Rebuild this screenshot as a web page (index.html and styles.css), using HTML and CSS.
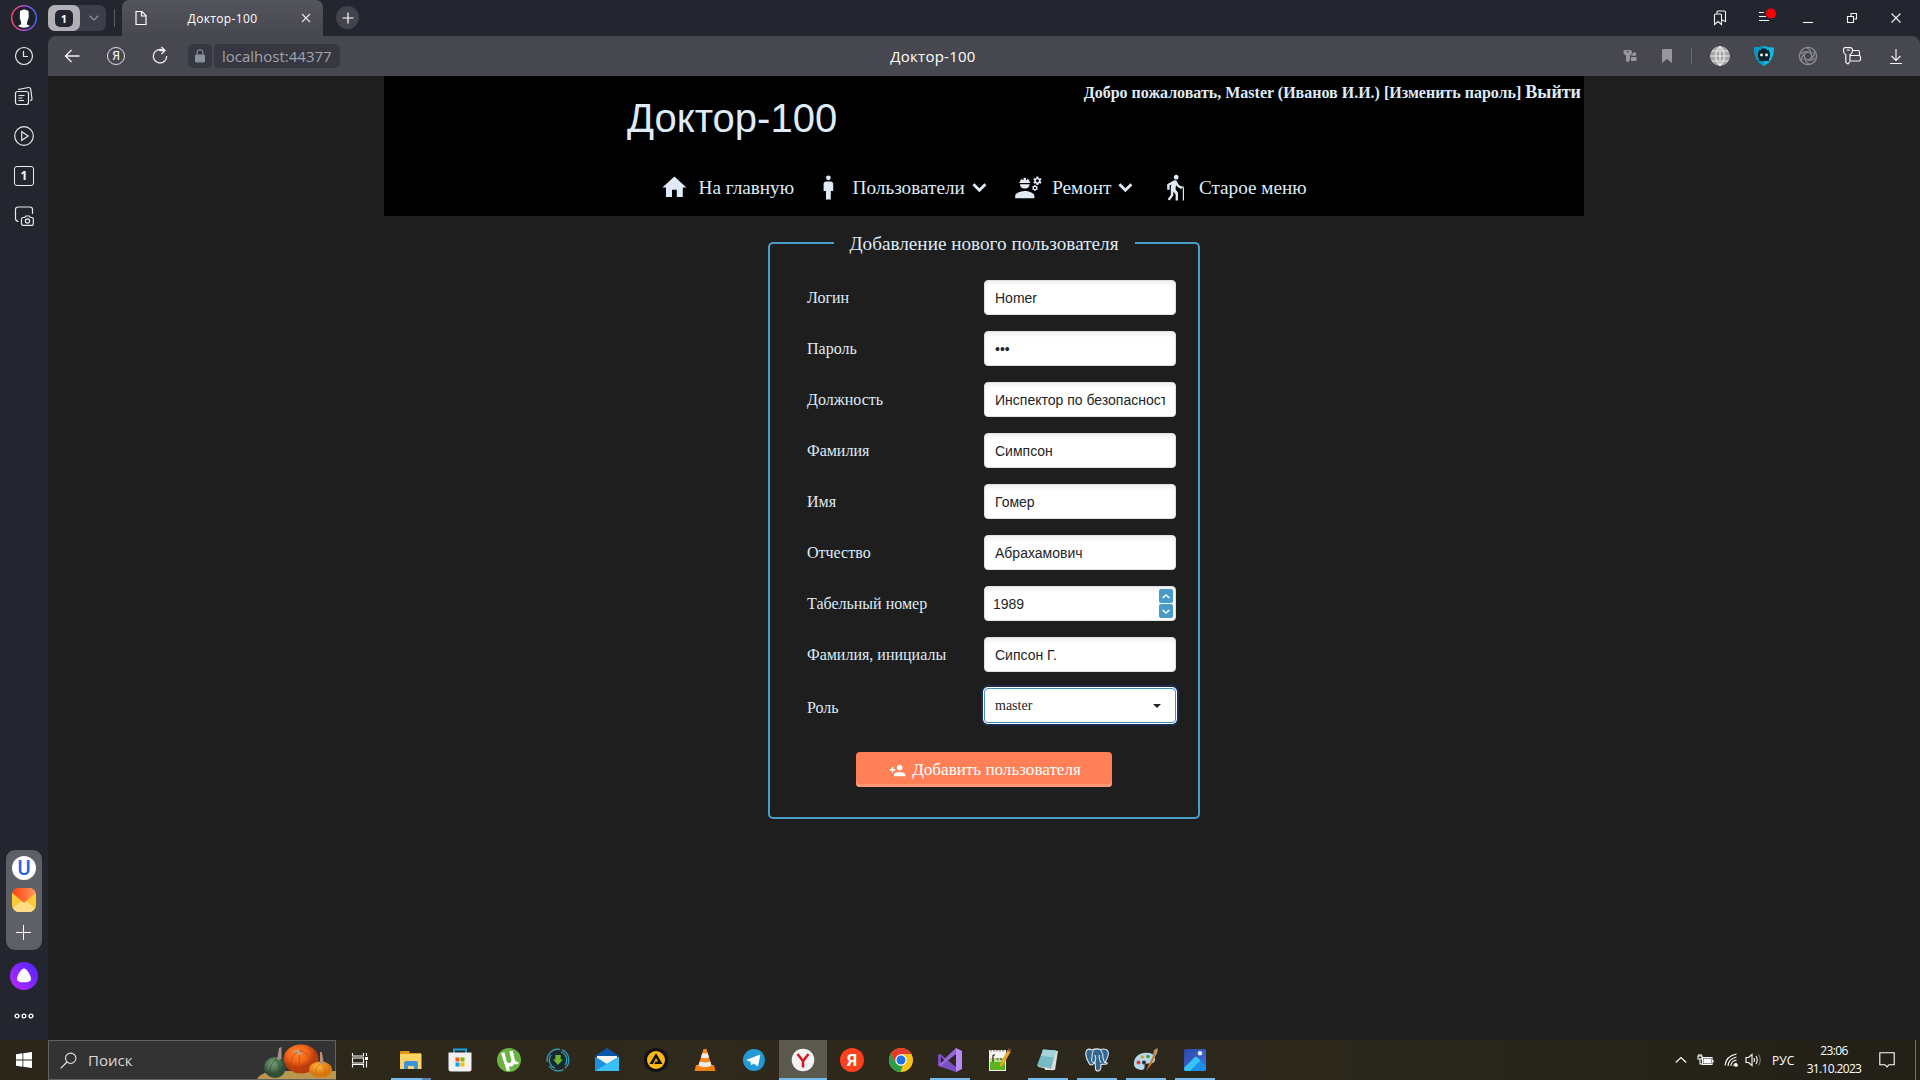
FILE: index.html
```html
<!DOCTYPE html>
<html lang="ru">
<head>
<meta charset="utf-8">
<title>Доктор-100</title>
<link rel="stylesheet" href="styles.css">
</head>
<body>
<div class="desktop">
  <div class="browser">
    <aside class="sidebar">
      <div class="side-top">
        <svg class="avatar" width="26" height="26" viewBox="0 0 26 26"><defs><linearGradient id="ring"><stop offset="0" stop-color="#ff4d5a"/><stop offset=".5" stop-color="#b94be0"/><stop offset="1" stop-color="#3b6bff"/></linearGradient></defs><circle cx="13" cy="13" r="12.3" fill="#20222b" stroke="url(#ring)" stroke-width="1.4"/><path d="M9 6q4-3 8.500 0l.3 6-1.800 5.500 0 2 3 1.500q-6 3.500-12 0l3.200-1.800-.2-2.200-1.200-4z" fill="#fff"/></svg>
        <svg class="side-icon" width="20" height="20" viewBox="0 0 20 20"><circle cx="10" cy="10" r="8.500"/><path d="M9.500 5v5.500H14"/></svg>
        <svg class="side-icon" width="20" height="20" viewBox="0 0 20 20"><rect x="1.500" y="5.500" width="13" height="13" rx="2"/><path d="M4.500 9.500h6M4.500 12h4M4.500 14.500h5.500M4 3.500l10.500-2q1.800-.2 2.200 1.500l1.300 10q0 1.500-1.800 1.700"/></svg>
        <svg class="side-icon" width="20" height="20" viewBox="0 0 20 20"><circle cx="10" cy="10" r="9.300"/><path d="M7.700 5.700v8.600l6.500-4.300z"/></svg>
        <div class="side-count">1</div>
        <svg class="side-icon" width="20" height="20" viewBox="0 0 20 20"><path d="M4.500 15.500q-3-.5-3-3V3.500q0-2.500 2.500-2.500h12q2.500 0 2.500 2.500V8M7.500 13q0-1.500 1.500-1.500h1.800l1-1.500h3.500l1 1.500H18q1.300 0 1.300 1.500v5q0 1.300-1.300 1.300H9q-1.500 0-1.500-1.300z"/><circle cx="13.500" cy="15" r="2.100"/></svg>
      </div>
      <div class="side-bottom">
        <div class="side-apps">
          <div class="app-u">U</div>
          <svg width="24" height="24" viewBox="0 0 24 24"><defs><linearGradient id="flap" x1="0" x2="1"><stop offset="0" stop-color="#ff3d12"/><stop offset="1" stop-color="#ff9a5c"/></linearGradient></defs><rect width="24" height="24" rx="7" fill="#ffc933"/><path d="M1 20 12 11 23 20q-2 4-6 4H7q-4 0-6-4z" fill="#ffdf85"/><path d="M.5 5Q2 0 7 0h10q5 0 6.500 5L12 15z" fill="url(#flap)"/></svg>
          <svg class="side-icon" width="16" height="16" viewBox="0 0 16 16"><path d="M7.500 0v15M0 7.500h15"/></svg>
        </div>
        <svg width="28" height="28" viewBox="0 0 28 28"><defs><linearGradient id="alice" x1="0" y1="1" x2="1" y2="0"><stop offset="0" stop-color="#c026ff"/><stop offset="1" stop-color="#4a26ff"/></linearGradient></defs><circle cx="14" cy="14" r="14" fill="url(#alice)"/><path d="M14 6.500c2.500 0 7 6.500 7 10.500 0 2.500-3 3.300-7 3.300s-7-.8-7-3.300c0-4 4.500-10.500 7-10.500z" fill="#fff"/></svg>
        <svg class="dots" width="20" height="6" viewBox="0 0 20 6"><circle cx="3" cy="3" r="1.900"/><circle cx="10" cy="3" r="1.900"/><circle cx="17" cy="3" r="1.900"/></svg>
      </div>
    </aside>

    <div class="window">
      <div class="tabstrip">
        <div class="tab-group"><span class="group-badge"><span>1</span></span><svg width="10" height="6" viewBox="0 0 10 6"><path d="M.7.700 5 5 9.300.7" fill="none" stroke="#8b8c94" stroke-width="1.300"/></svg></div>
        <div class="strip-sep"></div>
        <div class="tab">
          <svg width="12" height="16" viewBox="0 0 12 16"><path d="M1 1.500h6l4 4v9H1zM6.500 1.500V6H11" fill="none" stroke="#fff" stroke-width="1.200"/></svg>
          <span class="tab-title">Доктор-100</span>
          <svg width="10" height="10" viewBox="0 0 10 10"><path d="m1 1 8 8M9 1 1 9" stroke="#e4e4e8" stroke-width="1.100"/></svg>
        </div>
        <div class="new-tab"><svg width="12" height="12" viewBox="0 0 12 12"><path d="M6 .5v11M.5 6h11" stroke="#fff" stroke-width="1.200"/></svg></div>
        <div class="window-controls">
          <svg width="16" height="16" viewBox="0 0 16 16"><path d="M2.500 5q0-1 1-1h5q1 0 1 1v9.500L6 11.500l-3.500 3zM5 4V2q0-1 1-1h6.500q1 0 1 1v9.500L10 10" /></svg>
          <svg class="menu-icon" width="20" height="16" viewBox="0 0 20 16"><path d="M1 3.500h5M1 7.500h7M1 11.500h10"/><circle cx="13" cy="4.500" r="5" class="alert"/></svg>
          <svg width="12" height="12" viewBox="0 0 12 12"><path d="M1 10.500h10"/></svg>
          <svg width="12" height="12" viewBox="0 0 12 12"><path d="M1.500 4.500h6v6h-6zM5 4.500v-3h5.500V7h-3"/></svg>
          <svg width="12" height="12" viewBox="0 0 12 12"><path d="m1.500 1.500 9 9M10.500 1.500l-9 9"/></svg>
        </div>
      </div>

      <div class="toolbar">
        <div class="nav-buttons">
          <svg width="18" height="18" viewBox="0 0 18 18"><path d="M16.500 9H2.500M8.500 3l-6 6 6 6"/></svg>
          <div class="ya-button">Я</div>
          <svg width="18" height="20" viewBox="0 0 18 20"><path d="M12.500 4.500A6.700 6.700 0 1 0 15.700 10M8.500 4.500h5.500M10.500 1l3.500 3.500-3.500 3.500"/></svg>
        </div>
        <div class="lock"><svg width="10" height="14" viewBox="0 0 10 14"><path d="M2.200 6V3.300q0-2.500 2.800-2.500t2.800 2.500V6" fill="none" stroke="#7f848c" stroke-width="1.300"/><rect y="5.500" width="10" height="8" rx="1.500" fill="#8a929a"/></svg></div>
        <div class="url">localhost:44377</div>
        <div class="page-title">Доктор-100</div>
        <div class="extensions">
          <svg class="grey" width="14" height="14" viewBox="0 0 14 14"><path fill-rule="evenodd" d="M1.500 1h6Q9 1 9 3.500 9 5.500 7 6.500V11l-2.200 2.500L3 12V6.500Q.3 5.500.3 3 .3 1 1.500 1zM3.500 2.300v1h2.500v-1zM10 3.500h3v3.300H8.200V6.500Q9.600 5.500 10 3.500zM8 8h5.500v4H8z"/></svg>
          <svg class="grey" width="10" height="14" viewBox="0 0 10 14"><path d="M0 1q0-1 1-1h8q1 0 1 1v13l-5-4-5 4z"/></svg>
          <div class="bar-sep"></div>
          <svg width="20" height="20" viewBox="0 0 20 20"><circle cx="10" cy="10" r="10" fill="#a6a6a6"/><path d="M0 10h20M2 5h16M2 15h16M10 0v20M10 0Q1 10 10 20M10 0q9 10 0 20" fill="none" stroke="#e6e6e6" stroke-width="1.200"/></svg>
          <svg width="20" height="20" viewBox="0 0 20 20"><path d="M0 1.500Q5 1.500 10 0q5 1.500 10 1.500Q20 16 10 20 0 16 0 1.500z" fill="#10b9e2"/><path d="M0 1.500Q5 1.500 10 0v20Q0 16 0 1.500z" fill="#0896bd"/><path d="M5 4h2l1-1.500h4L13 4h2v2h1v6h-1v3H5v-3H4V6h1z" fill="#10232d"/><circle cx="7.500" cy="9" r="1.400" fill="#fff"/><circle cx="12.500" cy="9" r="1.400" fill="#fff"/></svg>
          <svg class="swirl" width="20" height="20" viewBox="0 0 20 20"><circle cx="10" cy="10" r="8.600"/><circle cx="10" cy="10" r="3.800"/><path d="M10 6.200q-4.500-1-7 2M13.300 8q-.8-4.500-4.500-6M13.600 12q3.500-3 2.400-6.500M10 13.800q4.500 1 7-2M6.700 12q.8 4.500 4.500 6M6.400 8q-3.500 3-2.400 6.500"/></svg>
          <svg class="line" width="20" height="20" viewBox="0 0 20 20"><path d="M3 1.600h5.500Q10.500 1.600 10.500 4.500T8 8.800V15.500L6 18l-2.200-1.600V8.800Q1.500 7.500 1.500 4.500T3 1.600zM5 4.200h2.500M11 4.500h5q1.500 0 1.500 1.500v3.500M8.500 9.500H17q1.500 0 1.500 1.500v2.500q0 1.500-1.500 1.500H9"/></svg>
          <svg class="line" width="14" height="18" viewBox="0 0 14 18"><path d="M7 2v11M2.500 9 7 13.500 11.500 9M1 16.500h12"/></svg>
        </div>
      </div>

      <main class="page">
        <header class="site-header">
          <div class="login">Добро пожаловать, Master (Иванов И.И.) [Изменить пароль] <b>Выйти</b></div>
          <h1>Доктор-100</h1>
          <nav class="menu">
            <a><svg viewBox="0 0 24 24"><path d="M10 20v-6h4v6h5v-8h3L12 3 2 12h3v8z"/></svg><span>На главную</span></a>
            <a><svg viewBox="0 0 24 24"><path d="M14 7h-4c-1.100 0-2 .9-2 2v6h2v7h4v-7h2V9c0-1.100-.9-2-2-2z"/><circle cx="12" cy="4" r="2"/></svg><span>Пользователи</span><svg class="chevron" viewBox="0 0 24 24"><path d="m7 9.300 5 5 5-5"/></svg></a>
            <a><svg viewBox="0 0 24 24"><path d="M9 15c-2.670 0-8 1.340-8 4v2h16v-2c0-2.660-5.330-4-8-4zM5 9.300c0 2.100 1.790 3.700 4 3.700s4-1.600 4-3.700zM4.740 8.300h8.520c.27 0 .49-.1.490-.3 0-.2-.22-.4-.49-.4H13c0-1.300-.81-2.400-2-3v.9c0 .28-.22.5-.5.5S10 5.780 10 5.500V4.140C9.680 4.060 9.350 4 9 4s-.68.06-1 .14V5.500c0 .28-.22.5-.5.5S7 5.780 7 5.500v-.9C5.810 5.200 5 6.300 5 7.600h-.26c-.27 0-.49.2-.49.4s.22.3.49.3z"/><path fill-rule="evenodd" d="M21.980 6.230l.93-.83-.75-1.300-1.190.39c-.14-.11-.3-.2-.47-.27L20.250 3h-1.500l-.25 1.220c-.17.07-.33.16-.48.27l-1.180-.39-.75 1.300.93.83c-.02.17-.02.35 0 .52l-.93.85.75 1.300 1.200-.38c.13.1.28.18.43.25l.28 1.230h1.500l.27-1.220c.16-.07.3-.15.44-.25l1.190.38.75-1.300-.93-.85c.03-.19.02-.37.010-.54zM19.500 7.750c-.69 0-1.250-.56-1.250-1.250s.56-1.250 1.250-1.250 1.250.56 1.250 1.250-.56 1.250-1.250 1.250zM19.400 10.790l-.85.28c-.1-.08-.21-.14-.33-.19l-.18-.88h-1.070l-.18.87c-.12.05-.24.12-.34.19l-.84-.28-.54.93.66.59c-.01.13-.01.25 0 .37l-.66.61.54.93.86-.27c.1.07.2.13.31.18l.18.88h1.070l.19-.87c.11-.05.22-.11.32-.18l.85.27.54-.93-.66-.61c.01-.13.01-.25 0-.37l.66-.59-.53-.93zm-1.900 2.600c-.49 0-.89-.4-.89-.89s.4-.89.89-.89.89.4.89.89-.4.89-.89.89z"/></svg><span>Ремонт</span><svg class="chevron" viewBox="0 0 24 24"><path d="m7 9.300 5 5 5-5"/></svg></a>
            <a><svg viewBox="0 0 24 24"><path d="M13.500 5.500c1.100 0 2-.9 2-2s-.9-2-2-2-2 .9-2 2 .9 2 2 2zM20 12.500V23h-1V12.500c0-.28-.22-.5-.5-.5s-.5.220-.5.500v1h-1v-.69c-1.460-.38-2.700-1.290-3.510-2.520-.31.87-.49 1.780-.49 2.710 0 .23.020.46.030.69L15 16.500V23h-2v-5l-1.780-2.540L11 19l-3 4-1.600-1.200L9 18.330V13c0-1.150.18-2.290.5-3.390L8 10.460V14H6V9.300l5.400-3.070v.01c.59-.31 1.320-.33 1.940.03.36.21.63.51.8.85l.79 1.670C15.580 10.100 16.940 11 18.500 11c.83 0 1.500.67 1.500 1.500z"/></svg><span>Старое меню</span></a>
          </nav>
        </header>

        <fieldset class="user-form">
          <legend>Добавление нового пользователя</legend>
          <div class="fields">
            <label>Логин</label><input type="text" value="Homer">
            <label>Пароль</label><input type="password" value="123">
            <label>Должность</label><input type="text" value="Инспектор по безопасности">
            <label>Фамилия</label><input type="text" value="Симпсон">
            <label>Имя</label><input type="text" value="Гомер">
            <label>Отчество</label><input type="text" value="Абрахамович">
            <label>Табельный номер</label>
            <div class="spinner"><span>1989</span><div class="steps"><i><svg width="8" height="5" viewBox="0 0 8 5"><path d="m.7 4 3.300-3 3.300 3"/></svg></i><i><svg width="8" height="5" viewBox="0 0 8 5"><path d="m.7 1 3.300 3 3.300-3"/></svg></i></div></div>
            <label>Фамилия, инициалы</label><input type="text" value="Сипсон Г.">
            <label class="role-label">Роль</label>
            <div class="select"><span>master</span><svg width="8" height="4" viewBox="0 0 8 4"><path d="M0 0h8L4 4z" fill="#212529"/></svg></div>
          </div>
          <button class="submit"><svg width="17" height="17" viewBox="0 0 24 24"><path d="M15 12c2.210 0 4-1.790 4-4s-1.790-4-4-4-4 1.790-4 4 1.790 4 4 4zm-9-2V7H4v3H1v2h3v3h2v-3h3v-2H6zm9 4c-2.670 0-8 1.340-8 4v2h16v-2c0-2.660-5.330-4-8-4z" fill="#fff"/></svg><span>Добавить пользователя</span></button>
        </fieldset>
      </main>
    </div>
  </div>

  <footer class="taskbar">
    <div class="start"><svg width="16" height="16" viewBox="0 0 16 16"><path d="M0 2.200 6.500 1.300V7.500H0zM7.300 1.200 16 0v7.500H7.300zM0 8.400h6.500v6.300L0 13.800zM7.300 8.400H16V16l-8.700-1.200z" fill="#fff"/></svg></div>
    <div class="search">
      <svg width="17" height="17" viewBox="0 0 17 17"><circle cx="10.700" cy="6.300" r="5.200" fill="none" stroke="#e6e6e6" stroke-width="1.100"/><path d="M7 10 .7 16.300" stroke="#e6e6e6" stroke-width="1.200"/></svg>
      <span>Поиск</span>
      <svg class="pumpkins" width="79" height="36" viewBox="0 0 79 36"><defs><radialGradient id="po" cx=".4" cy=".3"><stop offset="0" stop-color="#ff8a2b"/><stop offset=".6" stop-color="#f0641a"/><stop offset="1" stop-color="#b93c0c"/></radialGradient><radialGradient id="pg" cx=".4" cy=".3"><stop offset="0" stop-color="#7fa07a"/><stop offset=".6" stop-color="#4f7551"/><stop offset="1" stop-color="#2f4d36"/></radialGradient><radialGradient id="py" cx=".4" cy=".3"><stop offset="0" stop-color="#ffb43c"/><stop offset="1" stop-color="#d9780f"/></radialGradient></defs><path d="M0 36q5-8 20-8h59v8z" fill="#b9974f"/><ellipse cx="44" cy="16" rx="17.500" ry="14.500" fill="url(#po)"/><path d="M44 7q-15 6-7 22M44 7q13 6 8 22M44 8q-4 12 0 22" fill="none" stroke="#c94a10" stroke-width=".8"/><path d="m36 8 6-1 3 4-2 1-3-3-4 1z" fill="#b8a496"/><ellipse cx="18" cy="24.500" rx="10.800" ry="10.500" fill="url(#pg)"/><path d="M19 16q-9 8-4 18M19 16q6 8 2 19" fill="none" stroke="#345438" stroke-width=".8"/><path d="m20 17 2-12 2.500-1v12z" fill="#a3918c"/><ellipse cx="63.500" cy="26.500" rx="11.500" ry="8" fill="url(#py)"/><path d="M64 20q-8 6-4 14M64 20q6 6 4 14" fill="none" stroke="#c76c0c" stroke-width=".8"/><path d="m63 21 0-12 1.800 0 2.200 12z" fill="#b58f78"/></svg>
    </div>
    <div class="task"><svg width="18" height="17" viewBox="0 0 18 17"><path d="M1.500 1v3h11V1M1.500 15.500v-3h11v3M1.500 6h11v5h-11zM15.500 1v3M15.500 9v6.500" fill="none" stroke="#fff" stroke-width="1.100"/><path d="M14 5h3v3h-3z" fill="#fff"/></svg></div>
    <div class="apps">
      <div class="task open explorer"><svg width="24" height="24" viewBox="0 0 24 24"><path d="M1 4q0-1 1-1h8l1 2h11v4H1z" fill="#dd9a18"/><path d="M1 6h21.500v15H1z" fill="#ffd466"/><path d="M5 21v-6.500l1.500-1.500h11l1.500 1.500V21h-4v-3H9v3z" fill="#3d94dc"/></svg></div>
      <div class="task"><svg width="24" height="24" viewBox="0 0 24 24"><path d="M6 6V1.500h12V6" fill="none" stroke="#18a3e6" stroke-width="2"/><path d="M.5 4.500h23V21q0 2.500-2.500 2.500H3Q.500 23.500.500 21z" fill="#f1f1f1"/><path d="M7.500 9.500h4v4h-4z" fill="#f25022"/><path d="M12.500 9.500h4v4h-4z" fill="#7fba00"/><path d="M7.500 14.500h4v4h-4z" fill="#00a4ef"/><path d="M12.500 14.500h4v4h-4z" fill="#ffb900"/></svg></div>
      <div class="task"><svg width="24" height="24" viewBox="0 0 24 24"><circle cx="12" cy="12" r="12" fill="#69b340"/><path d="m4 5 3.500-.7 2 8.500q1 3 3.500 2.300 2-.8 1.300-3.500l-2-8 3.500-.8 2 8.700q.8 2.700 3.200 2.500l1 1q-2 2.500-4.500.7-1.500 3.500-5.500 2.800l1 4-3.300.5z" fill="#fff"/></svg></div>
      <div class="task"><svg width="24" height="24" viewBox="0 0 24 24"><circle cx="12" cy="12" r="8" fill="#102b35"/><path d="M1.300 14A10.900 10.900 0 0 1 14 1.300M16 1.900A10.900 10.900 0 0 1 19 20.300M17.500 21.400A10.900 10.900 0 0 1 3 18M9 20A8.500 8.500 0 0 1 5 7M15 4A8.500 8.500 0 0 1 19 17" fill="none" stroke="#2fa5c4" stroke-width="1.200"/><path d="M9.300 7h5.400v4.500H17L12 17l-5-5.500h2.300z" fill="#6fb52d"/></svg></div>
      <div class="task"><svg width="24" height="24" viewBox="0 0 24 24"><path d="M0 8 12 0l12 8z" fill="#0a55ad"/><path d="M2 8h20v8H2z" fill="#f5f5f5"/><path d="M0 8.500 12 16l12-7.500V23H0z" fill="#1d8fe0"/><path d="M24 8.500 0 23h24z" fill="#3bc0f5"/></svg></div>
      <div class="task"><svg width="24" height="24" viewBox="0 0 24 24"><circle cx="12" cy="12" r="12" fill="#111"/><circle cx="12" cy="12" r="9" fill="#fdb813"/><path d="M12 5 5.500 16H9l3-6 2 3.500h-2.500L10.300 16h8.200z" fill="#111"/></svg></div>
      <div class="task"><svg width="24" height="24" viewBox="0 0 24 24"><path d="M3 17h18l1.500 6h-21z" fill="#f08010"/><path d="M10.500 1h3L19 19q-7 3.500-14 0z" fill="#f58a1c"/><path d="m9.300 5-1.400 4.500q4 1.500 8.200 0L14.700 5q-2.500 1-5.400 0zM6.700 13.500 5.400 17.500q6.500 3 13.200 0l-1.300-4q-5 2.200-10.600 0z" fill="#ededed"/></svg></div>
      <div class="task"><svg width="22" height="22" viewBox="0 0 24 24"><circle cx="12" cy="12" r="12" fill="#2399d6"/><path d="m4 11.800 14-5.500q1-.2.8 1L16.500 18q-.4 1-1.300.4l-3.700-2.700-1.800 1.800q-.6.5-.8-.5l-1-3.500L4.300 12.500z" fill="#fff"/></svg></div>
      <div class="task open active"><svg width="24" height="24" viewBox="0 0 24 24"><circle cx="12" cy="12" r="11.300" fill="#f3f3f3"/><path d="m6.500 6 5.500 7 5.500-7M12 12v7.500" fill="none" stroke="#d9141c" stroke-width="2.500"/></svg></div>
      <div class="task"><div class="ya-app">Я</div></div>
      <div class="task"><svg width="24" height="24" viewBox="0 0 24 24"><circle cx="12" cy="12" r="12" fill="#fbc116"/><path d="M1.600 6A12 12 0 0 1 22.400 6H12L6.800 15z" fill="#e33b2e"/><path d="m1.600 6 5.200 9 4 3 3-1-2.300 7A12 12 0 0 1 1.600 6z" fill="#2a9e48"/><circle cx="12" cy="12" r="5.700" fill="#fff"/><circle cx="12" cy="12" r="4.500" fill="#1a73e8"/></svg></div>
      <div class="task open"><svg width="24" height="24" viewBox="0 0 24 24"><path d="m0 7 2-1.200L18 19v5L2 18.500 0 17z" fill="#7b4fc0"/><path d="M0 17 18 0v6L2.500 18.500z" fill="#9565d8"/><path d="m18 0 6 3v18l-6 3z" fill="#b68cf2"/><path d="M3 9v6l3-3z" fill="#2b261b"/></svg></div>
      <div class="task"><svg width="24" height="24" viewBox="0 0 24 24"><path d="M2 2h17v21H2z" fill="#f4f4f0"/><path d="M3 11h15v11H3z" fill="#58b61c"/><path d="M3 10h15v4H3z" fill="#b9dd83"/><path d="M4 1.500v2M7 1.500v2M10 1.500v2M13 1.500v2M16 1.500v2" stroke="#444"/><path d="M6 7v7M6 7h2M9.500 11h2M13 11h2" stroke="#222" stroke-width="1.200"/><path d="m13 16 7.500-14 3 2L16 17l-3 2z" fill="#eaa72a"/><path d="m20.500 2 1-1.800 3 1.500-1 2z" fill="#9b4d39"/></svg></div>
      <div class="task open"><svg width="24" height="24" viewBox="0 0 24 24"><path d="m7 2 15 1-3 19H9z" fill="#d7dedc"/><path d="m7 1.500 13 1L15 21 1 17.500z" fill="#77b9c4"/><path d="m7 1.500 13 1-2 7L5 8z" fill="#a4d4da"/><path d="M1 17.500 15 21l2 1.500L3 19z" fill="#ececdf"/></svg></div>
      <div class="task open"><svg width="24" height="24" viewBox="0 0 24 24"><path d="M7 2Q2-.5 1 4t3.500 12q2 2 3.500 0 1 0 2-1.500.5 4 .5 6.500 1 3 4 1.500 1.500-1 1.500-6l5.500-.5q2-1.500-1.500-1.500Q25 6 22.500 2.500 20 0 15.500 1.500 11 0 7 2z" fill="#336791" stroke="#e8eef3" stroke-width="1.100"/><path d="M9 2.500Q6.500 4 7 9l-.5 4q1.500 2.500 3.500 1 1.500-4 0-7M15.500 2q3 3 2.500 8l1.500 4.500M14 7q0 5 2 8" fill="none" stroke="#e8eef3"/></svg></div>
      <div class="task open"><svg width="24" height="24" viewBox="0 0 24 24"><path d="M9 5Q1 7 0 14t7 8q4 0 3.500-3.500t4-3Q22 16 21 10T9 5z" fill="#b5d9e8"/><circle cx="4.500" cy="14.500" r="2" fill="#d84434"/><circle cx="8.500" cy="9" r="1.800" fill="#e79b3b"/><circle cx="14" cy="8.500" r="1.800" fill="#3d9a45"/><circle cx="10" cy="14.500" r="2" fill="#20323e"/><path d="m12 23 3-7 4.500-9 2 1L17 17z" fill="#d07a2c"/><path d="m19 7 1-5 3.500-2q1 4-2 8z" fill="#b98f62"/></svg></div>
      <div class="task open"><svg width="22" height="22" viewBox="0 0 22 22"><defs><linearGradient id="ph" x1="0" y1="0" x2="1" y2="1"><stop offset="0" stop-color="#284aa8"/><stop offset="1" stop-color="#4a70e0"/></linearGradient></defs><rect width="22" height="22" rx="2" fill="url(#ph)"/><path d="M0 19 10.500 8.500q1.500-1.300 3 0L22 17v3q0 2-2 2H2q-2 0-2-3z" fill="#1d8fe8"/><path d="M0 19 10.500 8.500q1.500-1.300 3 0l3 3L6 22H2q-2 0-2-3z" fill="#36c3f7"/><circle cx="16" cy="4.300" r="2.200" fill="#e8f3ff"/></svg></div>
    </div>
    <div class="tray">
      <svg width="12" height="8" viewBox="0 0 12 8"><path d="m.8 6.500 5.200-5 5.200 5" /></svg>
      <svg width="17" height="14" viewBox="0 0 17 14"><path d="M5.500 4.500H15v7H5.500zM16 7v2.500M1 3h4v3H1zM2 3V1M4 3V1M3 6v5h2"/><path d="M7 6h6.500v4H7z" fill="#fff"/></svg>
      <svg width="14" height="14" viewBox="0 0 14 14"><path d="M1 12.500Q2 3 12.500 1M4 13Q4.500 6 12.500 4M6.800 13q.5-5 5.700-6M9.500 13q.5-2.500 3-3"/><circle cx="12" cy="12" r="1.300" fill="#fff"/></svg>
      <svg width="17" height="14" viewBox="0 0 17 14"><path d="M1 4.500h2.500L7 1.500v11l-3.500-3H1zM9 5q1 2 0 4M11 3q2.500 4 0 8"/><path d="M13.500 1.500q3.500 5.500 0 11" opacity=".4"/></svg>
      <span class="lang">РУС</span>
      <div class="clock"><span>23:06</span><span>31.10.2023</span></div>
      <svg width="16" height="17" viewBox="0 0 16 17"><path d="M.8.800h14.400v11.900H10L8 14.900 6 12.700H.8z"/></svg>
      <div class="show-desktop"></div>
    </div>
  </footer>
</div>
</body>
</html>
```
FILE: styles.css
```css
* { box-sizing: border-box; }
body { margin: 0; background: #1e1e1e; overflow: hidden; font-family: "Open Sans", "Noto Sans", sans-serif; }
svg { display: block; flex: none; }

.desktop { width: 1920px; height: 1080px; display: flex; flex-direction: column; }
.browser { flex: 1; display: flex; min-height: 0; background: #24262f; }

/* Browser side panel */
.sidebar { width: 48px; display: flex; flex-direction: column; justify-content: space-between; padding: 5px 0 16px; }
.side-top, .side-bottom { display: flex; flex-direction: column; align-items: center; }
.side-top { gap: 20px; }
.avatar { margin-bottom: -5px; }
.side-icon { fill: none; stroke: #e9e9ec; stroke-width: 1.2; }
.side-count { width: 20px; height: 20px; border: 1px solid #f0f0f0; border-radius: 3px; color: #fff; font-size: 12px; line-height: 18px; font-weight: 700; text-align: center; }
.side-apps { width: 36px; height: 100px; border-radius: 9px; background: #5f5f68; padding-top: 6px; display: flex; flex-direction: column; align-items: center; gap: 8px; margin-bottom: 12px; }
.side-apps .side-icon { margin-top: 5px; stroke: #fff; stroke-width: 1; }
.app-u { width: 24px; height: 24px; border-radius: 50%; background: #fff; color: #2762ea; font: 500 20px/24px Roboto, sans-serif; text-align: center; }
.dots { margin-top: 23px; margin-bottom: 5px; fill: none; stroke: #fff; stroke-width: 1.4; }

.window { flex: 1; display: flex; flex-direction: column; }

/* Tab strip */
.tabstrip { height: 36px; display: flex; align-items: center; background: #24262f; }
.tab-group { width: 58px; height: 26px; border-radius: 7px; background: #3d3e49; display: flex; align-items: center; gap: 9px; }
.group-badge { width: 32px; height: 26px; border-radius: 7px; background: #b1b1b5; display: flex; align-items: center; justify-content: center; }
.group-badge span { width: 18px; height: 17px; border-radius: 5px; background: #24262f; color: #fff; font-size: 11px; font-weight: 700; line-height: 17px; text-align: center; }
.strip-sep { width: 1px; height: 18px; background: #5a5b65; margin: 0 7px 0 8px; }
.tab { width: 201px; height: 36px; border-radius: 7px 7px 0 0; background: linear-gradient(#54545d, #474750); display: flex; align-items: center; padding: 0 12px 0 13px; }
.tab-title { flex: 1; text-align: center; color: #fff; font-size: 12px; letter-spacing: .35px; padding-right: 3px; }
.new-tab { width: 23px; height: 23px; margin: 0 0 1px 13px; border-radius: 50%; background: #42434d; display: flex; align-items: center; justify-content: center; }
.window-controls { flex: 1; display: grid; grid-template-columns: repeat(5, 44px); justify-content: end; justify-items: center; align-items: center; padding-right: 2px; }
.window-controls svg { fill: none; stroke: #f4f4f6; stroke-width: 1.1; }
.window-controls .menu-icon { margin: 0 0 2px 7px; overflow: visible; }
.window-controls .alert { fill: #f00; stroke: none; }

/* Address bar */
.toolbar { height: 40px; border-radius: 8px 8px 0 0; background: #474750; display: flex; align-items: center; }
.nav-buttons { display: flex; align-items: center; gap: 26px; width: 140px; padding-left: 15px; }
.nav-buttons svg { fill: none; stroke: #f2f2f4; stroke-width: 1.3; }
.ya-button { width: 18px; height: 18px; border: 1px solid #e4e4e7; border-radius: 50%; color: #fff; font: 12px/17px Roboto, sans-serif; text-align: center; }
.lock { width: 24px; height: 24px; border-radius: 5px; background: #363741; display: flex; align-items: center; justify-content: center; }
.url { width: 126px; height: 24px; margin-left: 2px; padding-left: 8px; border-radius: 5px; background: #363741; color: #a3a4aa; font-size: 15px; line-height: 24px; white-space: nowrap; }
.page-title { flex: none; width: 420px; margin-left: 383px; text-align: center; color: #fff; font-size: 15px; line-height: 20px; letter-spacing: .25px; }
.extensions { flex: 1; display: grid; grid-template-columns: 40px 34px 14px repeat(5, 44px); justify-content: end; justify-items: center; align-items: center; padding-right: 2px; }
.grey { fill: #96969c; }
.bar-sep { width: 1px; height: 16px; background: #6a6a73; }
.swirl { fill: none; stroke: #8d8d94; stroke-width: 1.3; }
.line { fill: none; stroke: #f4f4f6; stroke-width: 1.2; }

/* Site page */
.page { flex: 1; background: #1e1e1e; display: flex; flex-direction: column; align-items: center; color: #dfebf7; font-family: "Liberation Serif", "Times New Roman", serif; }
.site-header { width: 1200px; height: 140px; background: #000; display: flex; flex-direction: column; }
.login { height: 20px; padding: 8px 3px 0; text-align: right; font-size: 16px; line-height: 18px; font-weight: 700; white-space: nowrap; }
.login b { font-size: 18px; line-height: 16px; }
.site-header h1 { margin: 0 0 0 243px; font: 400 40px/44px "Liberation Sans", Arial, sans-serif; }
.menu { display: flex; gap: 20px; margin: 33px 0 0 276px; }
.menu a { display: flex; align-items: center; height: 29px; font-size: 19.2px; line-height: 22px; white-space: nowrap; }
.menu span { padding-top: 1px; }
.menu svg { width: 28.8px; height: 28.8px; fill: #dfebf7; }
.menu a > svg:first-child { margin-right: 9.8px; }
.menu .chevron { fill: none; stroke: #dfebf7; stroke-width: 2.4; }

.user-form { width: 432px; height: 586px; margin: 17px 0 0; padding: 27px 0 0; border: 2px solid #489fcc; border-radius: 5px; }
.user-form legend { height: 20px; margin: 0 auto; padding: 0 16px; font-size: 19.2px; line-height: 22px; white-space: nowrap; }
.fields { margin-left: 37px; display: grid; grid-template-columns: 177px 192px; grid-auto-rows: 35px; row-gap: 16px; align-items: center; font-size: 16px; }
.fields label { line-height: 18px; white-space: nowrap; }
.fields .role-label { padding-top: 4px; }
.fields input, .spinner, .select { width: 192px; height: 35px; border: 1px solid #dee2e6; border-radius: 4px; background: #fff; color: #212529; box-shadow: inset 0 4px 4px -1px #f1f1f1; padding: 0 10px; font: 14px "Liberation Sans", Arial, sans-serif; }
.spinner, .select { display: flex; align-items: center; justify-content: space-between; }
.spinner { padding: 0 2px 0 8px; }
.steps { display: grid; gap: 1px; }
.steps i { width: 14px; height: 14px; border-radius: 2px; background: #479bc8; display: flex; align-items: center; justify-content: center; }
.steps path { fill: none; stroke: #fff; stroke-width: 1.6; }
.select { font-family: "Liberation Serif", serif; border-color: #4193bd; box-shadow: 0 0 0 1px #fff, 0 0 1px 3px #1d2b52; padding-right: 14px; }
.submit { width: 256px; height: 35px; margin: 29px 0 0 86px; padding: 1px 0 0 2px; border: 0; border-radius: 4px; background: #ff7f57; box-shadow: inset 0 -3px #ff9877; color: #fff; display: flex; align-items: center; justify-content: center; gap: 6px; font: 17.1px "Liberation Serif", serif; white-space: nowrap; }

/* Windows taskbar */
.taskbar { height: 40px; background: linear-gradient(90deg, #2a261a, #2f281d 35%, #2b271b 70%, #222017); display: flex; }
.start, .task { width: 48px; height: 40px; display: flex; align-items: center; justify-content: center; }
.search { width: 288px; border: 1px solid #626262; background: #333; color: #d7d7d7; display: flex; align-items: center; padding-left: 11px; font-size: 15px; }
.search span { flex: 1; padding-left: 11px; }
.pumpkins { align-self: flex-end; margin-right: -1px; }
.apps { display: flex; gap: 1px; margin-left: 3px; }
.open { background: linear-gradient(#76b9ed, #76b9ed) 50% 100% / 40px 2px no-repeat; }
.explorer { background-image: linear-gradient(90deg, #76b9ed 31px, #5884ac 31px); }
.active { background-color: #5b584d; background-size: 48px 2px; }
.ya-app { width: 24px; height: 24px; border-radius: 50%; background: #fc3f1d; color: #fff; font: 700 17px/24px Roboto, sans-serif; text-align: center; }
.tray { flex: 1; display: flex; align-items: center; justify-content: flex-end; color: #fff; font-size: 12px; }
.tray svg { fill: none; stroke: #fff; stroke-width: 1.1; }
.tray svg:nth-child(2) { margin-left: 10px; }
.tray svg:nth-child(3) { margin-left: 10px; }
.tray svg:nth-child(4) { margin-left: 7px; }
.lang { margin-left: 10px; width: 24px; }
.clock { width: 62px; margin: 0 14px 0 7px; display: flex; flex-direction: column; align-items: center; line-height: 18px; letter-spacing: -.65px; }
.show-desktop { width: 5px; height: 40px; margin-left: 20px; border-left: 1px solid #77756e; }
```
